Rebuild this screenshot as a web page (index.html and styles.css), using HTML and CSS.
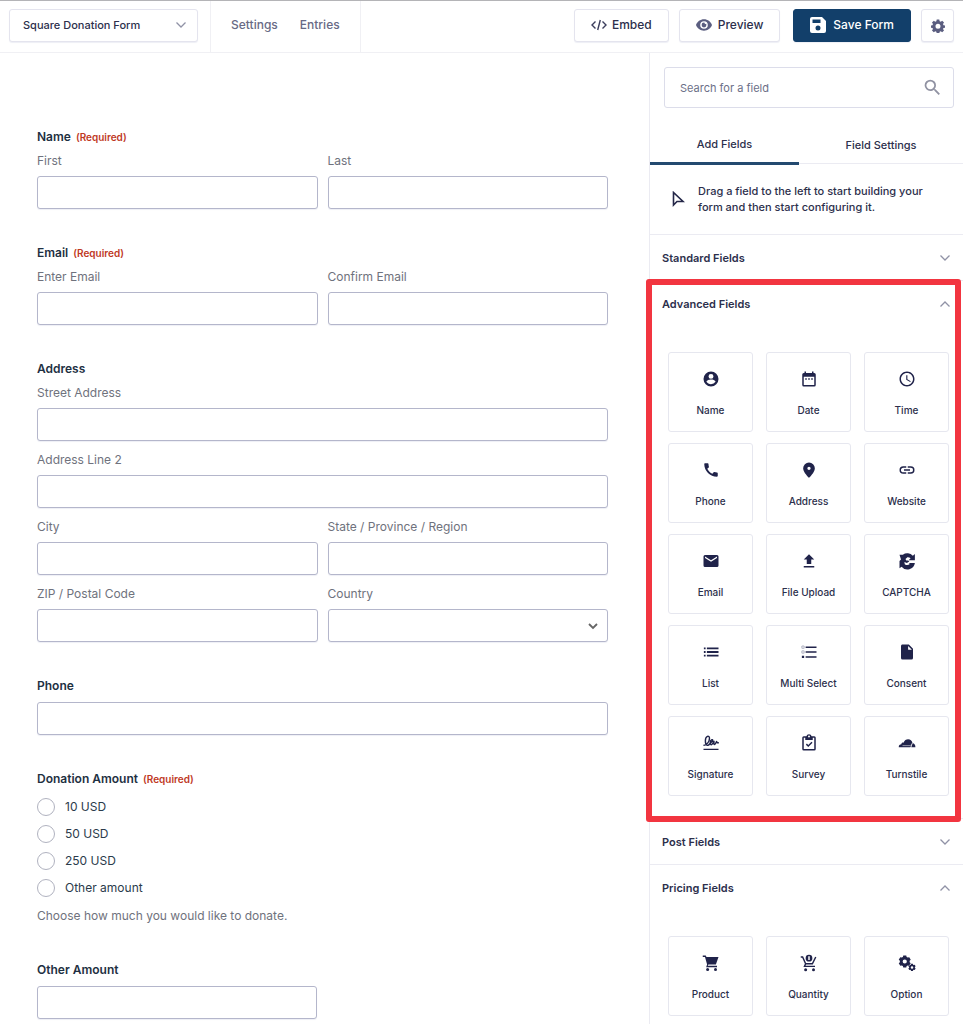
FILE: index.html
```html
<!DOCTYPE html>
<html lang="en">
<head>
<meta charset="utf-8">
<meta name="viewport" content="width=device-width, initial-scale=1">
<title>Square Donation Form</title>
<link rel="stylesheet" href="styles.css">
</head>
<body>
<div class="app">
  <header class="topbar">
    <div class="form-switch">
      <button class="btn switcher" type="button">Square Donation Form
        <svg class="chevron" viewBox="0 0 12 12"><path d="M1.500 3.500 6 8l4.500-4.500"/></svg>
      </button>
    </div>
    <nav class="topnav">
      <a href="#settings">Settings</a>
      <a href="#entries">Entries</a>
    </nav>
    <div class="actions">
      <button class="btn embed" type="button">
        <svg class="icon" viewBox="0 0 16 16"><path class="line" d="M4.500 4.500 1 8l3.500 3.500M11.500 4.500 15 8l-3.500 3.500M9.300 3 6.700 13"/></svg>Embed
      </button>
      <button class="btn preview" type="button">
        <svg class="icon" viewBox="0 0 24 24"><path fill-rule="evenodd" d="M12 3.500C6.500 3.500 1.700 7 0 12c1.700 5 6.500 8.500 12 8.500S22.300 17 24 12c-1.700-5-6.500-8.500-12-8.500zm0 14.200a5.700 5.700 0 1 1 0-11.400 5.700 5.700 0 0 1 0 11.400zM12 8.400A3.600 3.600 0 1 0 15.600 12c0-.6-.2-1.200-.4-1.700a1.800 1.800 0 0 1-2.500-1.800c-.2-.1-.5-.1-.7-.1z"/></svg>Preview
      </button>
      <button class="btn save" type="button">
        <svg class="icon" viewBox="0 0 16 16"><path fill-rule="evenodd" d="M2 0h10l4 4v10a2 2 0 0 1-2 2H2a2 2 0 0 1-2-2V2a2 2 0 0 1 2-2zm.500 2.500v3.500h8V2.500zM8 8.500a2.500 2.500 0 1 0 0 5 2.500 2.500 0 0 0 0-5z"/></svg>Save Form
      </button>
      <button class="btn gear" type="button" aria-label="Form options">
        <svg class="icon" viewBox="0 0 24 24"><path fill-rule="evenodd" d="M9.800 1h4.400l.6 3 1.900.8 2.500-1.700 3.100 3.100-1.700 2.500.8 1.900 3 .6v3.600l-3 .6-.8 1.900 1.700 2.500-3.100 3.100-2.500-1.700-1.900.8-.6 3H9.800l-.6-3-1.900-.8-2.500 1.700-3.100-3.100 1.700-2.500-.8-1.900-2.600-.6v-3.600l2.600-.6.8-1.900-1.700-2.500 3.100-3.100 2.500 1.700L9.200 4zM12 8.200a4.300 4.300 0 1 0 0 8.600 4.300 4.300 0 0 0 0-8.600z"/></svg>
      </button>
    </div>
  </header>

  <div class="workspace">
    <main class="canvas">
      <form class="form">
        <fieldset class="field">
          <legend class="title">Name <span class="required">(Required)</span></legend>
          <div class="inputs">
            <label class="sub">First<input class="box" type="text"></label>
            <label class="sub">Last<input class="box" type="text"></label>
          </div>
        </fieldset>
        <fieldset class="field">
          <legend class="title">Email <span class="required">(Required)</span></legend>
          <div class="inputs">
            <label class="sub">Enter Email<input class="box" type="email"></label>
            <label class="sub">Confirm Email<input class="box" type="email"></label>
          </div>
        </fieldset>
        <fieldset class="field">
          <legend class="title">Address</legend>
          <div class="inputs">
            <label class="sub wide">Street Address<input class="box" type="text"></label>
            <label class="sub wide">Address Line 2<input class="box" type="text"></label>
            <label class="sub">City<input class="box" type="text"></label>
            <label class="sub">State / Province / Region<input class="box" type="text"></label>
            <label class="sub">ZIP / Postal Code<input class="box" type="text"></label>
            <label class="sub">Country
              <span class="select-wrap">
                <select class="box"><option></option></select>
                <svg class="select-arrow" viewBox="0 0 12 12"><path d="M2 4l4 4 4-4"/></svg>
              </span>
            </label>
          </div>
        </fieldset>
        <div class="field single">
          <label class="title" for="phone">Phone</label>
          <input class="box" id="phone" type="tel">
        </div>
        <fieldset class="field">
          <legend class="title">Donation Amount <span class="required">(Required)</span></legend>
          <div class="choices">
            <label class="choice"><input type="radio" name="amount">10 USD</label>
            <label class="choice"><input type="radio" name="amount">50 USD</label>
            <label class="choice"><input type="radio" name="amount">250 USD</label>
            <label class="choice"><input type="radio" name="amount">Other amount</label>
          </div>
          <p class="description">Choose how much you would like to donate.</p>
        </fieldset>
        <div class="field single">
          <label class="title" for="other">Other Amount</label>
          <input class="box half" id="other" type="text">
        </div>
      </form>
    </main>

    <aside class="sidebar">
      <div class="search">
        <input type="search" placeholder="Search for a field" aria-label="Search for a field">
        <svg class="search-icon" viewBox="0 0 24 24"><path d="M15.500 14h-.79l-.28-.27A6.470 6.470 0 0 0 16 9.500 6.500 6.500 0 1 0 9.500 16c1.610 0 3.090-.59 4.230-1.570l.27.28v.79l5 4.990L20.490 19l-4.990-5zm-6 0C7.010 14 5 11.990 5 9.500S7.010 5 9.500 5 14 7.010 14 9.500 11.990 14 9.500 14z"/></svg>
      </div>
      <div class="tabs" role="tablist">
        <button class="tab active" type="button" role="tab" aria-selected="true">Add Fields</button>
        <button class="tab" type="button" role="tab" aria-selected="false">Field Settings</button>
      </div>
      <div class="hint">
        <svg class="pointer" viewBox="0 0 16 16"><path d="M3.500 1.500v12.500L7 10.500h6z"/></svg>
        <p>Drag a field to the left to start building your form and then start configuring it.</p>
      </div>

      <section class="group">
        <button class="group-head" type="button">Standard Fields<svg class="chevron" viewBox="0 0 12 12"><path d="M1.500 3.500 6 8l4.500-4.500"/></svg></button>
      </section>

      <section class="group highlighted">
        <button class="group-head" type="button">Advanced Fields<svg class="chevron" viewBox="0 0 12 12"><path d="M1.500 8.500 6 4l4.500 4.500"/></svg></button>
        <div class="cards">
          <button class="card" type="button"><svg viewBox="0 0 24 24"><path fill-rule="evenodd" d="M12 2a10 10 0 1 0 0 20 10 10 0 0 0 0-20zm0 3.200a3.300 3.300 0 1 1 0 6.600 3.300 3.300 0 0 1 0-6.600zM12 19c-2.500 0-4.700-1.200-6-3.200.03-2 4-3 6-3s5.970 1 6 3A7.200 7.200 0 0 1 12 19z"/></svg>Name</button>
          <button class="card" type="button"><svg viewBox="0 0 24 24"><path d="M9 11H7v2h2v-2zm4 0h-2v2h2v-2zm4 0h-2v2h2v-2zm2-7h-1V2h-2v2H8V2H6v2H5a2 2 0 0 0-2 2v14a2 2 0 0 0 2 2h14a2 2 0 0 0 2-2V6a2 2 0 0 0-2-2zm0 16H5V9h14v11z"/></svg>Date</button>
          <button class="card" type="button"><svg viewBox="0 0 24 24"><path d="M11.990 2C6.470 2 2 6.480 2 12s4.470 10 9.990 10C17.520 22 22 17.520 22 12S17.520 2 11.990 2zM12 20c-4.420 0-8-3.580-8-8s3.580-8 8-8 8 3.580 8 8-3.580 8-8 8zm.5-13H11v6l5.250 3.150.75-1.230-4.500-2.670z"/></svg>Time</button>
          <button class="card" type="button"><svg viewBox="0 0 24 24"><path d="M20.010 15.380c-1.230 0-2.420-.2-3.530-.56a.98.98 0 0 0-1.010.24l-1.570 1.970c-2.830-1.350-5.480-3.900-6.890-6.830l1.950-1.660c.27-.28.35-.67.24-1.020-.37-1.110-.56-2.300-.56-3.530 0-.54-.45-.99-.99-.99H4.190C3.650 3 3 3.240 3 3.990 3 13.280 10.730 21 20.010 21c.71 0 .99-.63.99-1.180v-3.450c0-.54-.45-.99-.99-.99z"/></svg>Phone</button>
          <button class="card" type="button"><svg viewBox="0 0 24 24"><path fill-rule="evenodd" d="M12 2a7.800 7.800 0 0 0-7.800 7.800C4.200 15.500 12 22.500 12 22.500s7.800-7 7.800-12.700A7.800 7.800 0 0 0 12 2zm0 5.600a2.200 2.200 0 1 1 0 4.400 2.200 2.200 0 0 1 0-4.400z"/></svg>Address</button>
          <button class="card" type="button"><svg viewBox="0 0 24 24"><path d="M3.900 12c0-1.710 1.390-3.100 3.100-3.100h4V7H7a5 5 0 0 0 0 10h4v-1.900H7c-1.710 0-3.100-1.390-3.100-3.100zM8 13h8v-2H8v2zm9-6h-4v1.900h4a3.100 3.100 0 0 1 0 6.200h-4V17h4a5 5 0 0 0 0-10z"/></svg>Website</button>
          <button class="card" type="button"><svg viewBox="0 0 24 24"><path d="M20 4H4a2 2 0 0 0-2 2v12a2 2 0 0 0 2 2h16a2 2 0 0 0 2-2V6a2 2 0 0 0-2-2zm0 4-8 5-8-5V6l8 5 8-5v2z"/></svg>Email</button>
          <button class="card" type="button"><svg viewBox="0 0 24 24"><path d="M9 16h6v-6h4l-7-7-7 7h4v6zm-4 2.500h14v2H5z"/></svg>File Upload</button>
          <button class="card" type="button"><svg viewBox="0 0 24 24"><path d="M22.500 2.500V11h-8.300l2.600-2.600A5.600 5.600 0 0 0 12.500 7L10 9.200l1 2.200h2.500l1.500 1.200-3.200 2.200-3.300-1.600.5 3a5.600 5.600 0 0 0 6.800-.2l-1.300-1.300h8A10 10 0 0 1 4.800 19.500L2 21.500V12L4 10 2 3.500h4.500A10 10 0 0 1 19.800 5z"/></svg>CAPTCHA</button>
          <button class="card" type="button"><svg viewBox="0 0 24 24"><path d="M2.500 6h2.300v2.400H2.500zM2.500 10.800h2.300v2.400H2.500zM2.500 15.600h2.300V18H2.500zM6.500 6H22v2.400H6.500zM6.500 10.800H22v2.400H6.500zM6.500 15.600H22V18H6.500z"/></svg>List</button>
          <button class="card" type="button"><svg viewBox="0 0 24 24"><path d="M7.500 4.500H22v2H7.500zM7.500 11H22v2H7.500zM7.500 17.500H22v2H7.500zM2.500 17h3v3h-3z"/><path class="thin" d="M2.500 4h3v3h-3zM2.500 10.500h3v3h-3z"/></svg>Multi Select</button>
          <button class="card" type="button"><svg viewBox="0 0 24 24"><path fill-rule="evenodd" d="M6 2h8.500L20 7.500V20a2 2 0 0 1-2 2H6a2 2 0 0 1-2-2V4c0-1.100.9-2 2-2zm7.500 2v5h5z"/></svg>Consent</button>
          <button class="card" type="button"><svg viewBox="0 0 24 24"><path class="stroke" d="M2 15c4 .5 8-5 8-9.500C10 1.500 4.500 2 4.500 9c0 7 3.500 7.500 6 4 2-2.800 3.800-3 3.800-4.500 0-2-3.300-1-3.300 3 0 4.500 3 3.500 5-2.500 0 3-.5 5 .8 5S19 10 19.500 10s-.5 2.500 3 1.500M2 20.500h20"/></svg>Signature</button>
          <button class="card" type="button"><svg viewBox="0 0 24 24"><path fill-rule="evenodd" d="M19 3h-3.500a3.600 3.600 0 0 0-7 0H5a2 2 0 0 0-2 2v15a2 2 0 0 0 2 2h14a2 2 0 0 0 2-2V5a2 2 0 0 0-2-2zm-7-1a1.300 1.300 0 1 1 0 2.600A1.300 1.300 0 0 1 12 2zm7 18H5V5h2v3h10V5h2z"/><path class="stroke" d="m8.500 13.500 2.500 2.500 5-5"/></svg>Survey</button>
          <button class="card" type="button"><svg viewBox="0 0 24 24"><path d="M1 17.500c-.2-2.200 1.500-3.700 3.400-3.700.2-1.900 1.700-2.600 3-2.200C8.400 8.500 11 7 13.500 7c3 0 5 2 5.700 4.600L16.500 17.500zM19.500 12.200c2.200 0 4 2.300 3.700 5.300h-5.500z"/><path class="cut" d="M6 15.500h10.500M17 16l1.500-3.500"/></svg>Turnstile</button>
        </div>
      </section>

      <section class="group">
        <button class="group-head" type="button">Post Fields<svg class="chevron" viewBox="0 0 12 12"><path d="M1.500 3.500 6 8l4.500-4.500"/></svg></button>
      </section>

      <section class="group">
        <button class="group-head" type="button">Pricing Fields<svg class="chevron" viewBox="0 0 12 12"><path d="M1.500 8.500 6 4l4.500 4.500"/></svg></button>
        <div class="cards last">
          <button class="card" type="button"><svg viewBox="0 0 24 24"><path d="M1 2h4l1 2h16l-3.500 10H8.500l-.8 1.800H20v1.700H5.500L6.800 14 4 4H1z"/><circle cx="7.500" cy="20.500" r="2"/><circle cx="18" cy="20.500" r="2"/></svg>Product</button>
          <button class="card" type="button"><svg viewBox="0 0 24 24"><path class="stroke" d="M1 4h2.500l4 9h9l4.500-9M7.500 13 6 16.500h14"/><path fill-rule="evenodd" d="M12 1a4.500 4.500 0 1 0 0 9 4.500 4.500 0 0 0 0-9zm-1 2h2v5h-2z"/><circle cx="7.500" cy="21" r="2"/><circle cx="18" cy="21" r="2"/></svg>Quantity</button>
          <button class="card" type="button"><svg viewBox="0 0 24 24"><path fill-rule="evenodd" d="M7 2h4l.5 2 1.500.8 2-.6 2 3.400-1.500 1.500v1.800l1.500 1.500-2 3.400-2-.6-1.500.8-.5 2H7l-.5-2-1.500-.8-2 .6-2-3.400 1.500-1.500V9.100L1 7.600l2-3.400 2 .6L6.500 4zm2 5.200a2.800 2.800 0 1 0 0 5.600 2.800 2.800 0 0 0 0-5.600zM17.500 13h2.300l.4 1.300.8.4 1.300-.3 1.200 2-1 1v1l1 1-1.200 2-1.300-.3-.8.4-.4 1.300h-2.300l-.4-1.300-.8-.4-1.300.3-1.200-2 1-1v-1l-1-1 1.200-2 1.300.3.8-.4zm1.200 3.200a1.700 1.700 0 1 0 0 3.400 1.700 1.700 0 0 0 0-3.400z"/></svg>Option</button>
        </div>
      </section>
    </aside>
  </div>
</div>
</body>
</html>
```
FILE: styles.css
```css
* { box-sizing: border-box; }

body {
  margin: 0;
  background: #fff;
  color: #2c2f4c;
  font-family: Inter, "Liberation Sans", sans-serif;
  font-size: 12px;
  line-height: 16px;
}

button, input, select { font: inherit; color: inherit; }
button { cursor: pointer; }

.app {
  display: flex;
  flex-direction: column;
  min-height: 100vh;
  border-top: 1px solid #b4b4b7;
}

/* Top bar */
.topbar {
  display: flex;
  height: 52px;
  border-bottom: 1px solid #f0f0f4;
}

.form-switch {
  width: 211px;
  padding: 8px 12px 0 9px;
  border-right: 1px solid #f0f0f4;
}

.btn {
  display: flex;
  align-items: center;
  height: 33px;
  padding: 0 16px 1px;
  border: 1px solid #e4e4ee;
  border-radius: 3px;
  background: #fff;
  box-shadow: 0 1px 1px #eeeff5;
  font-weight: 500;
  white-space: nowrap;
}

.switcher {
  justify-content: space-between;
  width: 100%;
  padding: 0 10px 1px 13px;
  font-size: 11px;
}

.chevron {
  width: 12px;
  height: 12px;
  fill: none;
  stroke: #9092a6;
  stroke-width: 1.3;
}

.topnav {
  display: flex;
  align-items: center;
  gap: 22px;
  padding: 0 20px 3px;
  border-right: 1px solid #f0f0f4;
}

.topnav a {
  color: #686a85;
  font-weight: 500;
  text-decoration: none;
}

.actions {
  display: flex;
  gap: 10px;
  margin-left: auto;
  padding: 8px 9px 0 0;
}

.icon {
  width: 16px;
  height: 16px;
  fill: #5b5e80;
}

.icon .line {
  fill: none;
  stroke: #3b3d5c;
  stroke-width: 1.4;
}

.embed { gap: 5px; }
.preview { gap: 6px; }

.save {
  gap: 7px;
  margin-left: 3px;
  border-color: #123f6a;
  background: #123f6a;
  color: #fff;
}

.save .icon { fill: #fff; }
.gear { justify-content: center; width: 33px; padding: 0; }
.gear .icon { width: 14px; height: 14px; }

/* Form canvas */
.workspace {
  display: flex;
  flex: 1;
}

.canvas {
  flex: 1;
  min-width: 0;
  padding: 74px 41px 4px 37px;
}

.form {
  display: flex;
  flex-direction: column;
  gap: 34px;
}

.field {
  min-width: 0;
  margin: 0;
  padding: 0;
  border: 0;
}

.single {
  display: flex;
  flex-direction: column;
  gap: 6px;
}

.title {
  padding: 0;
  color: #1e3042;
  font-size: 12px;
  font-weight: 600;
  line-height: 20px;
}

.required {
  margin-left: 2px;
  color: #c0391f;
  font-size: 10px;
  font-weight: 600;
}

.inputs {
  display: grid;
  grid-template-columns: 1fr 1fr;
  gap: 9px 10px;
  padding-top: 4px;
}

.sub {
  display: flex;
  flex-direction: column;
  gap: 5px;
  color: #6f727d;
  line-height: 20px;
}

.wide { grid-column: 1 / -1; }

.box {
  display: block;
  width: 100%;
  height: 33px;
  padding: 0 10px;
  border: 1px solid #b4b6cb;
  border-radius: 3px;
  background: #fff;
  box-shadow: 0 1px 1px #eeeff5;
  appearance: none;
}

.half { width: 49%; }

.select-wrap { position: relative; }

.select-arrow {
  position: absolute;
  top: 11px;
  right: 9px;
  width: 12px;
  height: 12px;
  fill: none;
  stroke: #666;
  stroke-width: 1.8;
  pointer-events: none;
}

.choices {
  display: flex;
  flex-direction: column;
  gap: 7px;
  padding-top: 8px;
}

.choice {
  display: flex;
  align-items: center;
  gap: 10px;
  color: #2b3b4b;
  line-height: 20px;
}

.choice input {
  width: 18px;
  height: 18px;
  margin: 0;
  border: 1px solid #b0b2bf;
  border-radius: 50%;
  background: #fff;
  appearance: none;
}

.choice input:checked { border: 5px solid #123f6a; }

.description {
  margin: 8px 0 0;
  color: #6f727d;
  line-height: 20px;
}

/* Sidebar */
.sidebar {
  width: 314px;
  border-left: 1px solid #ebebf2;
  font-size: 11px;
}

.search {
  position: relative;
  padding: 14px 9px 0 14px;
}

.search input {
  width: 100%;
  height: 41px;
  padding: 0 40px 0 15px;
  border: 1px solid #dcddea;
  border-radius: 3px;
  background: #fff;
  appearance: none;
}

.search input::placeholder { color: #6c6f88; opacity: 1; }

.search-icon {
  position: absolute;
  top: 24px;
  right: 20px;
  width: 21px;
  height: 21px;
  fill: #9092a2;
}

.tabs {
  display: flex;
  margin-top: 16px;
  border-bottom: 1px solid #ebebf2;
}

.tab {
  flex: 1 0 auto;
  height: 39px;
  padding: 2px 0 0;
  border: 0;
  background: none;
  font-weight: 500;
}

.tab.active {
  flex: 0 0 149px;
  margin-bottom: -2px;
  height: 41px;
  border-bottom: 3px solid #234a70;
}

.hint {
  display: flex;
  align-items: center;
  gap: 12px;
  padding: 19px 20px;
  border-bottom: 1px solid #ebebf2;
  font-weight: 500;
}

.hint p { margin: 0; }

.pointer {
  flex: none;
  width: 16px;
  height: 16px;
  fill: none;
  stroke: #242748;
  stroke-width: 1.6;
}

.group {
  position: relative;
  border-bottom: 1px solid #ebebf2;
}

.group:last-child { border-bottom: 0; }

.group-head {
  display: flex;
  align-items: center;
  justify-content: space-between;
  width: 100%;
  height: 45px;
  padding: 0 12px;
  border: 0;
  background: none;
  font-weight: 600;
}

.cards {
  display: grid;
  grid-template-columns: repeat(3, 1fr);
  gap: 11px 13px;
  padding: 26px 14px 22px 18px;
}

.cards.last { padding-bottom: 0; }

.card {
  display: flex;
  flex-direction: column;
  align-items: center;
  gap: 14px;
  height: 80px;
  padding: 17px 0 0;
  border: 1px solid #e6e7ef;
  border-radius: 3px;
  background: #fff;
  font-size: 10px;
  font-weight: 500;
  white-space: nowrap;
}

.card svg {
  width: 18px;
  height: 18px;
  fill: #20234a;
}

.card .stroke {
  fill: none;
  stroke: #20234a;
  stroke-width: 1.9;
}

.card .thin {
  fill: none;
  stroke: #9a9cb0;
  stroke-width: 1;
}

.card .cut {
  fill: none;
  stroke: #fff;
  stroke-width: 0.7;
}

.highlighted::after {
  content: "";
  position: absolute;
  inset: -2px 2px -4px -4px;
  border: 6px solid #f23540;
  border-radius: 3px;
  pointer-events: none;
}
```
